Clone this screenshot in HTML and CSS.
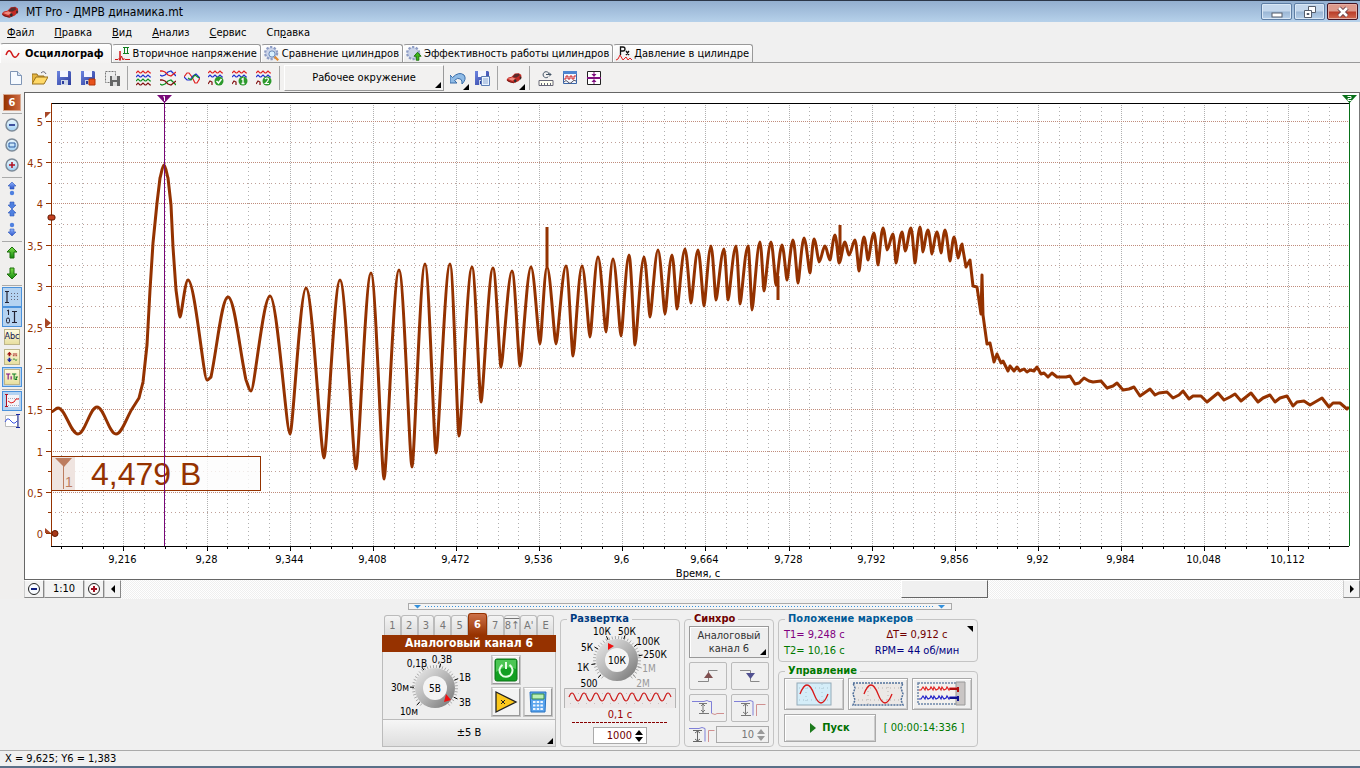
FILE: index.html
```html
<!DOCTYPE html>
<html lang="ru">
<head>
<meta charset="utf-8">
<title>MT Pro - ДМРВ динамика.mt</title>
<link rel="stylesheet" href="styles.css">
</head>
<body>
<svg class="defs" aria-hidden="true">
  <defs>
    <linearGradient id="g-blue" x1="0" y1="0" x2="0" y2="1"><stop offset="0" stop-color="#8fb4ff"/><stop offset="1" stop-color="#2a52c8"/></linearGradient>
    <linearGradient id="g-floppy" x1="0" y1="0" x2="1" y2="1"><stop offset="0" stop-color="#6d85e0"/><stop offset="1" stop-color="#2c3c9c"/></linearGradient>
    <linearGradient id="g-green" x1="0" y1="0" x2="0" y2="1"><stop offset="0" stop-color="#7ee04a"/><stop offset="1" stop-color="#148a10"/></linearGradient>
    <linearGradient id="g-knob" x1="0" y1="0" x2="1" y2="1"><stop offset="0" stop-color="#ececec"/><stop offset=".5" stop-color="#b4b4b4"/><stop offset="1" stop-color="#707070"/></linearGradient>
    <linearGradient id="g-lens" x1="0" y1="0" x2="0" y2="1"><stop offset="0" stop-color="#eefaff"/><stop offset="1" stop-color="#9fd0f4"/></linearGradient>
    <symbol id="car" viewBox="0 0 20 16"><path d="M1 9.500l2-2 4-1 4-4 5-.5 3 2 .5 4-4 4-6 2.500-6-1.500-2.500-2z" fill="#c22a24"/><path d="M8 7l3.500-4 4.500-.3 1 2.300-4 2.500z" fill="#5b2c2c"/><path d="M2 9l6-2 4 2-4 2.500z" fill="#f08a7e"/><path d="M1.500 11l4 2 4 .8" stroke="#5a1a18" fill="none"/><ellipse cx="11.500" cy="11.500" rx="1.600" ry="2" fill="#2e2e2e"/><ellipse cx="18" cy="8" rx="1" ry="1.800" fill="#2e2e2e"/></symbol>
    <symbol id="floppy" viewBox="0 0 16 16"><path d="M1 1h13l1 1v13H1z" fill="url(#g-floppy)"/><path d="M4 1h8v6H4z" fill="#f4f6ff"/><path d="M5 10h7v5H5z" fill="#cdd6e6"/><path d="M6 11h2v3H6z" fill="#2c3c9c"/></symbol>
    <symbol id="waves" viewBox="0 0 16 16"><g fill="none" stroke-width="1.200"><path d="M0 3l2-2 2 2h1l2-2 2 2h1l2-2 2 2h1" stroke="#e02020"/><path d="M0 7l2-2 2 2h1l2-2 2 2h1l2-2 2 2h1" stroke="#2030d0"/><path d="M0 11l2-2 2 2h1l2-2 2 2h1l2-2 2 2h1" stroke="#109020"/><path d="M0 15l2-2 2 2h1l2-2 2 2h1l2-2 2 2h1" stroke="#801010"/></g></symbol>
    <symbol id="waves3" viewBox="0 0 16 16"><g fill="none" stroke-width="1.200"><path d="M0 3l2-2 2 2h1l2-2 2 2h1l2-2 2 2h1" stroke="#e02020"/><path d="M0 7l2-2 2 2h1l2-2 2 2h1l2-2 2 2h1" stroke="#2030d0"/><path d="M0 14l2-3 2 1v3" stroke="#801010"/></g></symbol>
    <symbol id="gear" viewBox="0 0 18 18"><circle cx="8" cy="8" r="6.500" fill="#b9c4de" stroke="#8d9cc4" stroke-width="3" stroke-dasharray="2.400 1.700"/><circle cx="8" cy="8" r="5.500" fill="#ccd5ea"/></symbol>
  </defs>
</svg>

<header class="titlebar">
  <svg class="title-icon" viewBox="0 0 20 16"><use href="#car"/></svg>
  <h1>MT Pro - ДМРВ динамика.mt</h1>
  <div class="win-buttons">
    <button class="win" aria-label="Свернуть"><svg viewBox="0 0 28 16"><rect x="9" y="9" width="10" height="4" fill="#fff" stroke="#555d6b"/></svg></button>
    <button class="win" aria-label="Развернуть"><svg viewBox="0 0 28 16"><path d="M12.500 2.500h7v6h-7z" fill="#fff" stroke="#555d6b"/><path d="M8.500 6.500h7v7h-7z" fill="#fff" stroke="#555d6b"/><path d="M11 9.500h2v1h-2z" fill="#fff" stroke="#555d6b"/></svg></button>
    <button class="win close" aria-label="Закрыть"><svg viewBox="0 0 28 16"><path d="M10 4l8 8M18 4l-8 8" stroke="#65404a" stroke-width="4.500"/><path d="M10 4l8 8M18 4l-8 8" stroke="#fff" stroke-width="2.600"/></svg></button>
  </div>
</header>

<nav class="menu">
  <button><u>Ф</u>айл</button><button><u>П</u>равка</button><button><u>В</u>ид</button><button><u>А</u>нализ</button><button><u>С</u>ервис</button><button>Сп<u>р</u>авка</button>
</nav>

<nav class="tabs" role="tablist">
  <button class="tab active" role="tab" aria-selected="true"><svg class="ic" viewBox="0 0 16 16"><path d="M1 9q3-8 6-1t7-1" fill="none" stroke="#d01818" stroke-width="1.500"/></svg>Осциллограф</button>
  <button class="tab" role="tab"><svg class="ic" viewBox="0 0 16 16"><path d="M0 13.500h3l1-1 1 2V5v9l1.500-4 1.500 4 1-1.500 1 1h5" fill="none" stroke="#d01818"/><path d="M8 1.500h6M8 7.500h6M9.500 1v6M12.500 1v6" stroke="#108020" fill="none"/></svg>Вторичное напряжение</button>
  <button class="tab" role="tab"><svg class="ic" viewBox="0 0 18 18"><use href="#gear"/><circle cx="9" cy="9" r="3.500" fill="#d8f0ff" stroke="#5a7cb0"/><path d="M12 12l4 4" stroke="#e08a30" stroke-width="2.500"/></svg>Сравнение цилиндров</button>
  <button class="tab" role="tab"><svg class="ic" viewBox="0 0 18 18"><use href="#gear"/><path d="M13 7l4 4.500h-2.500V16h-3v-4.500H9z" fill="#3db61c" stroke="#176f0a"/></svg>Эффективность работы цилиндров</button>
  <button class="tab" role="tab"><svg class="ic" viewBox="0 0 16 16"><path d="M4.500 9V1H7q2 0 2 2T7 5H5M10 5l3 4M13 5l-3 4" fill="none" stroke="#111" stroke-width="1.300"/><path d="M0 14l2-1 2-4 3 5 3-3 2 3 2-2 2 2" fill="none" stroke="#e02020"/></svg>Давление в цилиндре</button>
</nav>

<div class="toolbar" role="toolbar">
  <button class="tool" aria-label="Новый"><svg viewBox="0 0 16 16"><path d="M2.500 1.500h7l4 4v9h-11z" fill="#f6faff" stroke="#7f95b5"/><path d="M9.500 1.500v4h4" fill="#d5e2f2" stroke="#7f95b5"/></svg></button>
  <button class="tool" aria-label="Открыть"><svg viewBox="0 0 16 16"><path d="M0 14V4h5l1 2h6v3" fill="#e5b540" stroke="#98701c"/><path d="M0 14l4-7h12l-4 7z" fill="#ffd968" stroke="#98701c"/><path d="M9 3q3-3 5 1" stroke="#667" fill="none"/></svg></button>
  <button class="tool" aria-label="Сохранить"><svg viewBox="0 0 16 16"><use href="#floppy"/></svg></button>
  <button class="tool" aria-label="Сохранить как"><svg viewBox="0 0 16 16"><use href="#floppy"/><path d="M9 9h6v6H9z" fill="#e8521c" stroke="#b03408"/></svg></button>
  <button class="tool" aria-label="Сохранить фрагмент"><svg viewBox="0 0 16 16"><path d="M1.500 1.500h10v11h-10z" fill="#eee" stroke="#777" stroke-dasharray="2 1"/><path d="M6 6h10v10H6z" fill="#666"/><path d="M8 6h5v4H8zM9 12h4v4H9z" fill="#ddd"/></svg></button>
  <i class="vsep"></i>
  <button class="tool" aria-label="Раздельно"><svg viewBox="0 0 16 16"><use href="#waves"/></svg></button>
  <button class="tool" aria-label="Попарно"><svg viewBox="0 0 16 16"><g fill="none" stroke-width="1.300"><path d="M0 5l2 1 3-1 3-3 3-1 5 5" stroke="#2030d0"/><path d="M0 1h2l3 1 3 3 3 1 5-4" stroke="#e02020"/><path d="M0 14l2 1 3-1 3-3 3-1 5 5" stroke="#109020"/><path d="M0 10h2l3 1 3 3 3 1 5-4" stroke="#801010"/></g></svg></button>
  <button class="tool" aria-label="Совместно"><svg viewBox="0 0 16 16"><g fill="none" stroke-width="1.200"><path d="M0 7l3-4 2 0 3 4 3 6h2l3-5" stroke="#e02020"/><path d="M0 7l3 3 3 0 3-4 3-2 4 4" stroke="#2030d0"/><path d="M4 8l3 2 4-5 4 3" stroke="#109020"/></g></svg></button>
  <button class="tool" aria-label="Готово"><svg viewBox="0 0 16 16"><use href="#waves3"/><circle cx="11" cy="11" r="4.500" fill="#2c9a2c"/><path d="M8.500 11l2 2 3-4" fill="none" stroke="#fff" stroke-width="1.500"/></svg></button>
  <button class="tool" aria-label="Вид 1"><svg viewBox="0 0 16 16"><use href="#waves3"/><circle cx="11" cy="11" r="4.500" fill="#2c9a2c"/><path d="M9.500 9.500l1.500-1v5M9.500 13.500h3" fill="none" stroke="#fff" stroke-width="1.300"/></svg></button>
  <button class="tool" aria-label="Вид 2"><svg viewBox="0 0 16 16"><use href="#waves3"/><circle cx="11" cy="11" r="4.500" fill="#2c9a2c"/><path d="M9 9q2-2 3.500 0 0 2-3 4.500h3.500" fill="none" stroke="#fff" stroke-width="1.200"/></svg></button>
  <i class="vsep"></i>
  <button class="workspace corner">Рабочее окружение</button>
  <button class="tool corner" aria-label="Отменить"><svg viewBox="0 0 16 16"><path d="M0 5v8h7L4.500 10.500q3-3.500 6-1.500 2 1.500 1.500 5 5-5 2-9Q9 1 2.500 7.500z" fill="#8fbbe6" stroke="#3a6da8"/></svg></button>
  <button class="tool" aria-label="Сохранить копию"><svg viewBox="0 0 16 16"><use href="#floppy"/><path d="M7.500 6.500h8v9h-8z" fill="#eaf3ff" stroke="#5c7db4"/><path d="M9 9h5M9 11h5M9 13h5" stroke="#8ba6d0"/></svg></button>
  <i class="vsep"></i>
  <button class="tool corner" aria-label="Автомобиль"><svg viewBox="0 0 20 16"><use href="#car"/></svg></button>
  <i class="vsep"></i>
  <button class="tool" aria-label="Линейка"><svg viewBox="0 0 16 16"><path d="M1 10.500h14v5H1z" fill="#fffff0" stroke="#667"/><path d="M3.500 15v-2M6.500 15v-2M9.500 15v-2M12.500 15v-2" stroke="#667"/><path d="M11 4a3 3 0 1 0-1 3M8 4.500h5l-2-2M13 4.500l-2 2" fill="none" stroke="#456"/></svg></button>
  <button class="tool" aria-label="Осциллограммы"><svg viewBox="0 0 16 16"><path d="M1.500 1.500h13v12h-13z" fill="#f4f8ff" stroke="#3b66a8"/><path d="M1 1h14v3H1z" fill="#4f86d0"/><path d="M2 9h2V6h2v3h2V6h2v3h2V6h2" fill="none" stroke="#d02020"/><path d="M2 12q2-3 4 0t4 0 4-1" fill="none" stroke="#556"/></svg></button>
  <button class="tool" aria-label="Выравнивание"><svg viewBox="0 0 16 16"><path d="M1.500 1.500h13v13h-13z" fill="#fff" stroke="#222"/><path d="M1 8h14" stroke="#801080" stroke-width="2"/><path d="M7.500 2h1v2h2L8 7 5.500 4h2zM7.500 14h1v-2h2L8 9l-2.500 3h2z" fill="#801080"/></svg></button>
</div>

<main class="work">
  <aside class="side">
    <button class="badge">6</button>
    <i class="hsep"></i>
    <button class="sb" aria-label="Уменьшить"><svg viewBox="0 0 16 16"><circle cx="8" cy="8" r="6" fill="url(#g-lens)" stroke="#7c8a98" stroke-width="1.500"/><path d="M5 8h6" stroke="#102080" stroke-width="1.500"/></svg></button>
    <button class="sb" aria-label="По размеру"><svg viewBox="0 0 16 16"><circle cx="8" cy="8" r="6" fill="url(#g-lens)" stroke="#7c8a98" stroke-width="1.500"/><path d="M5 6h6v4H5z" fill="none" stroke="#2858a0"/></svg></button>
    <button class="sb" aria-label="Увеличить"><svg viewBox="0 0 16 16"><circle cx="8" cy="8" r="6" fill="url(#g-lens)" stroke="#7c8a98" stroke-width="1.500"/><path d="M5 8h6M8 5v6" stroke="#b01020" stroke-width="1.500"/></svg></button>
    <i class="hsep"></i>
    <button class="sb" aria-label="Сдвинуть вверх"><svg viewBox="0 0 16 16"><path d="M8 1l4 4h-2v3H6V5H4z" fill="url(#g-blue)" stroke="#3058b8" stroke-width=".6"/><circle cx="8" cy="12" r="2.200" fill="#4f80e0"/></svg></button>
    <button class="sb" aria-label="Сжать"><svg viewBox="0 0 16 16"><path d="M6 1h4v3h2L8 8 4 4h2zM6 15h4v-3h2L8 8l-4 4h2z" fill="#4f80e0" stroke="#3058b8" stroke-width=".6"/></svg></button>
    <button class="sb" aria-label="Сдвинуть вниз"><svg viewBox="0 0 16 16"><path d="M8 15l4-4h-2V8H6v3H4z" fill="url(#g-blue)" stroke="#3058b8" stroke-width=".6"/><circle cx="8" cy="4" r="2.200" fill="#4f80e0"/></svg></button>
    <i class="hsep"></i>
    <button class="sb" aria-label="Выше"><svg viewBox="0 0 16 16"><path d="M8 2l5 5h-3v6H6V7H3z" fill="url(#g-green)" stroke="#1c6e0c"/></svg></button>
    <button class="sb" aria-label="Ниже"><svg viewBox="0 0 16 16"><path d="M8 14l5-5h-3V3H6v6H3z" fill="url(#g-green)" stroke="#1c6e0c"/></svg></button>
    <i class="hsep"></i>
    <button class="sb on" aria-pressed="true" aria-label="Сетка"><svg viewBox="0 0 16 16"><path d="M1 2.500h4M3 2v12M1 13.500h4" stroke="#223" fill="none" stroke-width="1.200"/><path d="M7 4.500h8M7 7.500h8M7 10.500h8" stroke="#667" stroke-dasharray="1 2"/></svg></button>
    <button class="sb on" aria-pressed="true" aria-label="Шкала"><svg viewBox="0 0 16 16"><path d="M8 2.500h5M10.500 2v12M8 13.500h5" stroke="#223" fill="none" stroke-width="1.200"/><path d="M3 2l1.500-1v5M2.500 10.500q0-1.500 1.500-1.500t1.500 1.500v2q0 1.500-1.500 1.500t-1.500-1.500z" fill="none" stroke="#223"/></svg></button>
    <button class="sb label" aria-label="Подписи"><span>Abc</span></button>
    <button class="sb label" aria-label="Полярность"><svg viewBox="0 0 14 14"><path d="M4 1L1 4h2v2h2V4h2z" fill="#a01010"/><path d="M4 13l3-3H5V8H3v2H1z" fill="#1020a0"/><path d="M8 3.500h5M8 5.500h2M11 5.500h2" stroke="#a01010"/><path d="M8 10q1.500-2 2.500 0t2.500 0" stroke="#108020" fill="none"/></svg></button>
    <button class="sb label on" aria-pressed="true" aria-label="Маркеры"><svg viewBox="0 0 14 14"><path d="M0 3.500h5M2.500 3v7M6 6v4" stroke="#801080" stroke-width="1.300"/><path d="M7 3.500h5M9.500 3v7M11 7h2l-2 3h2" fill="none" stroke="#108020" stroke-width="1.200"/></svg></button>
    <i class="hsep"></i>
    <button class="sb on" aria-pressed="true" aria-label="Левая шкала"><svg viewBox="0 0 16 16"><path d="M3 2h12v12H3z" fill="#f4f4f8"/><path d="M2.500 1v13M1 1.500h3M1 13.500h3" stroke="#b01020"/><path d="M4 5.500h11M4 12.500h11" stroke="#aab" stroke-dasharray="1 1"/><path d="M4 8l3 2 3-1 2-3 3 0" fill="none" stroke="#e02020"/></svg></button>
    <button class="sb" aria-label="Правая шкала"><svg viewBox="0 0 16 16"><path d="M1.500 2.500h12v11h-12z" fill="#fff" stroke="#bbb"/><path d="M14 1v14M12 1.500h4M12 14.500h4" stroke="#1828a0"/><path d="M1 9l2-3h2l4 4h2l2-2" fill="none" stroke="#4058e0"/></svg></button>
  </aside>
  <section class="view">
    <svg id="chart" class="chart" role="img" aria-label="Осциллограмма, канал 6"></svg>
    <div class="scroll">
      <button class="sbtn" aria-label="Мельче"><svg viewBox="0 0 14 14"><circle cx="7" cy="7" r="5.500" fill="#f8fbff" stroke="#222"/><path d="M4 7h6" stroke="#102080" stroke-width="2"/></svg></button>
      <button class="sbtn scale">1:10</button>
      <button class="sbtn" aria-label="Крупнее"><svg viewBox="0 0 14 14"><circle cx="7" cy="7" r="5.500" fill="#fff8f8" stroke="#222"/><path d="M4 7h6M7 4v6" stroke="#a01020" stroke-width="2"/></svg></button>
      <button class="sbtn arrow" aria-label="Назад"><svg viewBox="0 0 8 8"><path d="M6 0v8L2 4z" fill="#000"/></svg></button>
      <div class="track"><i class="before"></i><button class="thumb" aria-label="Прокрутка"></button><i class="after"></i></div>
      <button class="sbtn arrow" aria-label="Вперёд"><svg viewBox="0 0 8 8"><path d="M2 0v8l4-4z" fill="#000"/></svg></button>
    </div>
  </section>
</main>

<section class="deck">
  <button class="splitter" aria-label="Скрыть панель"><svg viewBox="0 0 8 5"><path d="M0 1h7L3.500 4.500z" fill="#3390dc"/></svg><i></i><svg viewBox="0 0 8 5"><path d="M0 1h7L3.500 4.500z" fill="#3390dc"/></svg></button>
  <div class="groups">
    <section class="channel">
      <div class="chtabs"><button>1</button><button>2</button><button>3</button><button>4</button><button>5</button><button class="cur">6</button><button>7</button><button><span class="over">8↑</span></button><button>A'</button><button>E</button></div>
      <h2>Аналоговый канал 6</h2>
      <div class="chbody">
        <svg id="knob-v" class="knob-v" viewBox="383 651 104 68"></svg>
        <div class="chbuttons">
          <button class="sq power" aria-label="Включить"><svg viewBox="0 0 24 24"><rect x="1" y="1" width="22" height="22" rx="2" fill="#12a022" stroke="#0b7416"/><path d="M2 2h20v9q-10-4-20 3z" fill="#4cc654"/><path d="M8.500 6.800a6.500 6.500 0 1 0 7 0M12 4v7" fill="none" stroke="#e6ffe6" stroke-width="2"/></svg></button>
          <button class="sq" aria-label="Усилитель"><svg viewBox="0 0 24 24"><path d="M2 2l20 10L2 22z" fill="#fbc81c" stroke="#222" stroke-width="1.300"/><path d="M7 10l4 4M11 10l-4 4" stroke="#222"/></svg></button>
          <button class="sq" aria-label="Калькулятор"><svg viewBox="0 0 24 24"><path d="M4 2h16l-1 20H5z" fill="#5aa4ee" stroke="#2872c0"/><path d="M6 4h12v5H6z" fill="#b9f0b4" stroke="#358848"/><path d="M7 12h10M7 15.500h10M7 19h10" stroke="#eef6ff" stroke-width="2" stroke-dasharray="2.500 1.200"/></svg></button>
        </div>
      </div>
      <button class="range corner">±5 В</button>
    </section>

    <fieldset class="sweep">
      <legend class="navy">Развертка</legend>
      <svg id="knob-t" class="knob-t" viewBox="564 626 112 62"></svg>
      <svg class="wave" viewBox="0 0 112 20"><rect width="112" height="20" fill="#ece9e9"/><path d="M.5 20V.5h111V20" fill="none" stroke="#b4b4b4"/><path d="M6 5.500h104M6 15.500h104" stroke="#c8c0c0" stroke-dasharray="1 7"/><path d="M5 9q3-8 6 0t6 0 6 0 6 0 6 0 6 0 6 0 6 0 6 0 6 0 6 0 6 0 6 0 6 0 6 0 6 0 6 0" fill="none" stroke="#cc1c1c" stroke-width="1.200"/></svg>
      <output class="span">0,1 с</output>
      <div class="dash"></div>
      <div class="spin"><input aria-label="Развертка" value="1000"><button aria-label="Изменить"><svg viewBox="0 0 8 12"><path d="M0 5h8L4 0zM0 7h8l-4 5z" fill="#000"/></svg></button></div>
    </fieldset>

    <fieldset class="sync">
      <legend class="maroon">Синхро</legend>
      <button class="source corner">Аналоговый<br>канал 6</button>
      <div class="syncgrid">
        <button class="flat" aria-label="Фронт"><svg viewBox="0 0 36 26"><path d="M8 18.500h10.500v-11h9" fill="none" stroke="#888"/><path d="M14 15h9l-4.500-6z" fill="#805050"/></svg></button>
        <button class="flat" aria-label="Спад"><svg viewBox="0 0 36 26"><path d="M8 7.500h10.500v11h9" fill="none" stroke="#888"/><path d="M14 10h9l-4.500 6z" fill="#505090"/></svg></button>
        <button class="flat" aria-label="Уровень"><svg viewBox="0 0 36 26"><path d="M2 6.500h12l3-1 2 1h2.500v12" fill="none" stroke="#8080d8"/><path d="M22 18.500l3 1 2-1h7" fill="none" stroke="#d09090"/><path d="M9 8.500h8M13 9v9M9 18.500h10M11 11l2-2 2 2M11 15l2 2 2-2" fill="none" stroke="#777"/></svg></button>
        <button class="flat" aria-label="Разность"><svg viewBox="0 0 36 26"><path d="M2 6.500h12l4-1 3 1v14" fill="none" stroke="#8080d8"/><path d="M24.500 21V9.500h9" fill="none" stroke="#d09090"/><path d="M9 8.500h9M13.500 8v12M9 20.500h10M11 11l2.500-2 2.500 2M11 17l2.500 2 2.500-2" fill="none" stroke="#777"/></svg></button>
      </div>
      <div class="hyst"><svg viewBox="0 0 26 18"><path d="M0 2.500h10l3-1 3 1v13" fill="none" stroke="#8080d8"/><path d="M19.500 16V4.500h6" fill="none" stroke="#d09090"/><path d="M4 4.500h9M8.500 4v12M4 15.500h9M6 7l2.500-2L11 7M6 13l2.500 2 2.500-2" fill="none" stroke="#666"/></svg>
        <div class="spin off"><input aria-label="Гистерезис" value="10" disabled><button aria-label="Изменить гистерезис" disabled><svg viewBox="0 0 8 12"><path d="M0 5h8L4 0zM0 7h8l-4 5z" fill="#999"/></svg></button></div></div>
    </fieldset>

    <div class="right">
      <fieldset class="markers">
        <legend class="blue">Положение маркеров</legend>
        <button class="fold" aria-label="Свернуть маркеры"></button>
        <output class="purple">T1= 9,248 с</output><output class="maroon mid">∆T= 0,912 с</output>
        <output class="green">T2= 10,16 с</output><output class="darkblue mid">RPM= 44 об/мин</output>
      </fieldset>
      <fieldset class="control">
        <legend class="green">Управление</legend>
        <div class="modes">
          <button class="mode" aria-label="Осциллограф"><svg viewBox="0 0 56 28"><rect x="11" y="3" width="34" height="22" fill="#d4edf8" stroke="#93aab8"/><path d="M13 8h30M13 20h30M20 4v20M36 4v20" stroke="#a9c4d0" stroke-dasharray="1 3"/><path d="M14 14q7-18 14 0t14 0" fill="none" stroke="#d81818" stroke-width="1.300"/></svg></button>
          <button class="mode" aria-label="Рулон"><svg viewBox="0 0 56 28"><path d="M3 3h50l-2 5 2 6-2 6 2 5H3l2-5-2-6 2-6z" fill="#ebe8e6" stroke="#50709a" stroke-width="1.500" stroke-dasharray="2 1"/><path d="M18 3v22M38 3v22M8 8h42M8 20h42" stroke="#b8b4b0" stroke-dasharray="1 3"/><path d="M14 14q7-18 14 0t14 0" fill="none" stroke="#d81818" stroke-width="1.300"/></svg></button>
          <button class="mode" aria-label="Запись"><svg viewBox="0 0 56 28"><path d="M4 3h46v21H4z" fill="#f3f1ee" stroke="#6d86a8" stroke-width="1.500" stroke-dasharray="2 1"/><path d="M42 2h9v23h-9z" fill="#c9c5c4" stroke="#999"/><path d="M5 10h2l2-3 2 3 1-3 2 3 2-1 1-2 2 3 1-3 2 3 2-1 1-2 2 3 1-3 2 3 2-1 1-2 2 3 1-2h8" fill="none" stroke="#e02020" stroke-width="1.200"/><path d="M36 9h8M44 7v5" stroke="#b01010" stroke-width="2"/><path d="M5 19h2l2-3 2 3 1-3 2 3 2-1 1-2 2 3 1-3 2 3 2-1 1-2 2 3 1-3 2 3 2-1 1-2 2 3 1-2h8" fill="none" stroke="#2020c8" stroke-width="1.200"/><path d="M36 18h8M44 16v5" stroke="#101090" stroke-width="2"/></svg></button>
        </div>
        <div class="run"><button class="start"><svg viewBox="0 0 6 10"><path d="M0 0v10l6-5z" fill="#1c7a1c"/></svg>Пуск</button><output class="green">[ 00:00:14:336 ]</output></div>
      </fieldset>
    </div>
  </div>
</section>

<footer class="status">X = 9,625; Y6 = 1,383</footer>
<script src="chart.js"></script>
</body>
</html>
```
FILE: styles.css
```css
* { box-sizing: border-box; }
html, body { height: 100%; }
body {
  margin: 0; display: flex; flex-direction: column; min-height: 760px;
  background: #f0f0f0; color: #000;
  font: 11px/14px "DejaVu Sans Condensed", "DejaVu Sans", sans-serif;
  border-bottom: 2px solid #5a7088;
}
button, input { font: inherit; color: inherit; margin: 0; padding: 0; border: 0; background: none; }
button { display: flex; align-items: center; justify-content: center; }
svg { display: block; flex: none; }
fieldset { margin: 0; min-width: 0; }
.defs { position: absolute; width: 0; height: 0; }

.titlebar { display: flex; align-items: center; height: 22px; flex: none; padding: 0 2px 0 1px; border-top: 1px solid #2b3648; background: linear-gradient(#93afd0, #b6d1ea); }
.titlebar h1 { margin: 0; font-size: 12px; font-weight: normal; flex: 1; }
.title-icon { width: 18px; height: 14px; margin-right: 7px; }
.win-buttons { display: flex; gap: 2px; }
.win { width: 31px; height: 17px; border: 1px solid #5e7ea4; border-radius: 2px; background: linear-gradient(#c4d7ec 48%, #9ab6d4 52%, #b7d0ea); box-shadow: inset 0 0 0 1px #d9e7f5; }
.win svg { width: 28px; height: 16px; }
.win.close { border-color: #431422; background: linear-gradient(#dd9a8c 48%, #b93b28 52%, #d06a50); box-shadow: inset 0 0 0 1px #e5aea4; }

.menu { display: flex; gap: 20px; padding: 0 7px; height: 21px; flex: none; }
.tabs { display: flex; align-items: flex-end; height: 20px; flex: none; border-bottom: 1px solid #999; }
.tab { height: 18px; padding: 0 3px 0 2px; gap: 2px; border: 1px solid #999; border-left-color: #fff; border-bottom: 0; border-radius: 3px 3px 0 0; background: linear-gradient(#fff, #ececec); white-space: nowrap; }
.tab.active { height: 20px; margin-bottom: -1px; padding: 0 7px 0 4px; gap: 4px; font-weight: bold; background: linear-gradient(#fff, #f3f2f1); }
.ic { width: 16px; height: 16px; }

.toolbar { display: flex; align-items: center; height: 29px; flex: none; padding-left: 4px; background: #f2f1f0; }
.tool { width: 24px; height: 24px; position: relative; }
.tool svg { width: 16px; height: 16px; }
.vsep { width: 1px; height: 24px; margin: 0 4px 0 3px; background: #a5a5a5; }
.corner { position: relative; }
.corner::after { content: ""; position: absolute; right: 2px; bottom: 2px; border: 3px solid; border-color: transparent #000 #000 transparent; }
.tool.corner::after { bottom: 0; right: 1px; }
.workspace { width: 160px; height: 26px; margin-right: 2px; border: 1px solid; border-color: #fff #999 #999 #fff; background: #f2f1f0; }

.work { display: flex; flex: 1; min-height: 0; }
.side { width: 24px; flex: none; padding: 2px 2px 0; background: #f0efee; }
.badge { width: 18px; height: 17px; margin: 0 1px; border: 1px solid #d8a890; background: linear-gradient(90deg, #963200, #cc6840); color: #fff; font-weight: bold; }
.hsep { display: block; height: 1px; margin: 2px 0 1px; background: #aaa; }
.sb { width: 20px; height: 20px; position: relative; }
.sb svg { width: 16px; height: 16px; }
.sb.on { background: #b5d3f1; border: 1px solid #4a92dc; }
.sb.label span, .sb.label svg { width: 16px; height: 16px; padding: 1px; background: linear-gradient(#fffbe0, #e8dfa0); border: 1px solid #bdb58a; font-size: 9px; line-height: 12px; }
.sb.label span { color: #101050; padding: 0; display: flex; justify-content: center; }

.view { flex: 1; min-width: 0; display: flex; flex-direction: column; }
.chart { flex: 1; min-height: 0; width: 100%; background: #fff; border: 1px solid #666; border-right-color: #777; }
.chart text { font-family: "DejaVu Sans Condensed", "DejaVu Sans", sans-serif; font-size: 11px; }
.chart .reading { font-family: "Liberation Sans", sans-serif; font-size: 32px; }
.chart .mark { font-family: "Liberation Sans", sans-serif; font-size: 14px; }
.scroll { display: flex; height: 19px; flex: none; }
.sbtn { width: 20px; height: 18px; background: #f3f3f3; border: 1px solid; border-color: #fff #888 #888 #ccc; }
.sbtn svg { width: 14px; height: 14px; }
.sbtn.scale { width: 40px; }
.sbtn.arrow { width: 17px; }
.sbtn.arrow svg { width: 8px; height: 8px; }
.track { display: flex; flex: 1; background: repeating-conic-gradient(#efefef 0 25%, #fff 0 50%) 0 0 / 2px 2px; }
.before { flex: 781; }
.thumb { flex: 85; height: 18px; background: #f0f0f0; border: 1px solid; border-color: #fff #666 #666 #fff; }
.after { flex: 356; }

.deck { flex: none; display: flex; flex-direction: column; align-items: center; gap: 2px; padding: 4px 0; height: 152px; border-bottom: 1px solid #aaa; }
.splitter { width: 544px; height: 7px; gap: 3px; padding: 0 5px; border: 1px solid #aaa; background: #f4f4f4; }
.splitter svg { width: 8px; height: 5px; }
.splitter i { flex: 1; height: 1px; background: repeating-linear-gradient(90deg, #3390dc 0 1px, transparent 1px 3px); }
.groups { display: flex; align-items: flex-end; gap: 4px; height: 135px; }

.channel { width: 174px; display: flex; flex-direction: column; }
.chtabs { display: flex; align-items: flex-end; padding: 0 2px; height: 22px; }
.chtabs button { width: 17px; height: 20px; color: #777; border: 1px solid #bbb; border-bottom: 0; border-radius: 3px 3px 0 0; background: linear-gradient(#f4f4f4, #dcdcdc); }
.chtabs .cur { width: 19px; height: 22px; color: #fff; font-weight: bold; border-color: #963200; background: linear-gradient(#cc7048, #963200); }
.over { text-decoration: overline; }
.channel h2 { margin: 0; height: 17px; font-size: 12px; line-height: 17px; text-align: center; color: #fff; background: #963200; }
.chbody { display: flex; justify-content: space-between; height: 68px; padding-right: 3px; border: 1px solid #bbb; border-top: 0; background: #eee; }
.knob-v { width: 104px; height: 68px; }
.knob-v text, .knob-t text { font-size: 10px; text-anchor: middle; }
.chbuttons { display: grid; grid-template-columns: 28px 28px; grid-auto-rows: 28px; gap: 4px; padding-top: 4px; }
.sq { border: 1px solid; border-color: #fff #999 #999 #ccc; background: #f3f3f3; box-shadow: 0 0 0 1px #c4c4c4; }
.sq svg { width: 24px; height: 24px; }
.power { grid-column: 1 / 3; width: 28px; }
.range { height: 27px; border: 1px solid #bbb; border-top: 0; background: linear-gradient(#f6f6f6, #dedede); }

fieldset { border: 1px solid #c4c4c4; border-radius: 4px; padding: 0 5px; }
legend { padding: 0 3px; height: 14px; font-weight: bold; }
.navy { color: #003a80; } .maroon { color: #700000; } .blue { color: #005a98; }
.green { color: #007800; } .purple { color: #800080; } .darkblue { color: #000080; }
.sweep { width: 120px; height: 135px; padding: 0 3px; }
.sweep legend { margin-left: 3px; }
.knob-t { width: 112px; height: 62px; }
.wave { width: 112px; height: 20px; }
.span { display: block; text-align: center; color: #900; line-height: 14px; }
.dash { margin: 0 8px; height: 1px; background: repeating-linear-gradient(90deg, #800 0 3px, transparent 3px 4px); }
.spin { display: flex; align-items: center; width: 54px; height: 17px; margin: 4px auto 0; padding-right: 3px; border: 1px solid #aaa; background: #fff; }
.spin input { flex: 1; min-width: 0; width: 100%; padding-right: 3px; text-align: right; color: #700000; }
.spin svg { width: 8px; height: 12px; }
.spin.off { background: #f0f0f0; margin: 0; }
.spin.off input { color: #777; }

.sync { width: 90px; height: 135px; padding: 0 4px; display: flow-root; }
.sync legend { margin-left: 2px; }
.source { width: 80px; height: 32px; margin-bottom: 4px; line-height: 13px; color: #333; border: 1px solid #999; background: #eee; box-shadow: inset 1px 1px #fff; }
.syncgrid { display: grid; grid-template-columns: 38px 38px; grid-auto-rows: 28px; gap: 4px; margin-bottom: 4px; }
.flat { border: 1px solid #bbb; border-radius: 2px; }
.flat svg { width: 36px; height: 26px; }
.hyst { display: flex; gap: 1px; }
.hyst > svg { width: 26px; height: 18px; }

.right { display: flex; flex-direction: column; gap: 2px; width: 200px; }
.markers { height: 50px; display: grid; grid-template-columns: 1fr 1fr; align-content: start; row-gap: 2px; padding-top: 2px; position: relative; }
.markers legend, .control legend { margin-left: 1px; }
.mid { text-align: center; margin: 0 4px 0 -12px; white-space: nowrap; }
.fold { position: absolute; right: 4px; top: 0; border: 3px solid; border-color: #000 #000 transparent transparent; }
.control { height: 83px; }
.modes { display: flex; gap: 4px; margin-bottom: 4px; }
.mode, .start { flex: 1; height: 32px; border: 1px solid #aaa; background: #f0f0f0; box-shadow: inset 1px 1px #fff, inset -1px -1px #ccc; }
.mode svg { width: 56px; height: 28px; }
.run { display: flex; align-items: center; }
.start { flex: none; width: 92px; height: 28px; gap: 6px; color: #007000; font-weight: bold; }
.start svg { width: 6px; height: 10px; }
.run output { flex: 1; text-align: center; white-space: nowrap; }

.status { flex: none; height: 15px; padding: 1px 5px; }
```
FILE: chart.js
```js
const INK = '#943200';

// Trace samples on the recorder grid: x 51..1349 covers the visible span,
// y 121 is 5 V and y 533 is 0 V. Smooth part first, then the fine-grained tail.
const smooth = '51,412 58,408 78,434 97,407 116,434 132,409 139,398 143,382 147,345 150,290 153,243 157,203 160,178 164,165 168,178 171,205 173,247 176,290 180,317 188,280 207,380 211,377 228,297 246,380 251,391 270,296 290,434 306,288 324,458 340,280 356,469 371,273 384,479 399,270 412,467 425,264 436,453 450,264 459,436 472,267 481,402 493,268 501,367 512,271 520,366 531,267 540,344 547,267 556,344 566,266 573,356 582,266 590,337 598,257 606,332 613,259 621,336 629,255 635,345 644,257 650,317 658,250 665,314 672,255 677,309 685,249 691,303 698,250 704,306 711,246 716,300 724,249 728,300 736,246 740,304 748,246 752,310 760,242 764,291 771,242 776,285 782,245 787,280 793,240 798,283 804,238 810,273 814,239 819,262 825,246 830,260 835,235 839,263 845,242 849,255 855,240 859,271 864,237 868,260 874,233 878,265 883,228 887,250 893,234 896,263 902,232 905,251 911,228 915,263 920,227 923,252 928,230 932,254 937,232 941,253 945,230 950,261 954,237 958,258 962,244';
const tail = '966,267 970,260 973,286 977,287 981,314 982,275 983,315 987,344 990,343 994,362 997,354 1001,363 1003,361 1008,371 1010,366 1014,371 1017,367 1020,371 1024,369 1027,372 1030,370 1034,371 1037,367 1041,374 1044,373 1048,377 1052,373 1057,377 1066,377 1070,376 1075,384 1079,383 1084,378 1089,381 1093,382 1101,381 1107,388 1113,386 1117,383 1123,390 1129,389 1134,387 1140,396 1150,389 1155,395 1159,393 1167,392 1173,398 1179,395 1183,391 1189,399 1193,396 1201,396 1207,402 1218,393 1224,400 1230,397 1235,394 1241,401 1251,393 1258,402 1263,398 1270,395 1275,402 1280,398 1287,396 1293,406 1297,402 1304,401 1310,405 1322,398 1329,407 1333,403 1340,403 1347,409 1349,407';
const spikes = [[547, 227, 267], [778, 276, 300], [840, 225, 255], [982, 275, 315]];

const parse = s => s.split(' ').map(p => p.split(',').map(Number));

function drawChart() {
  const el = document.getElementById('chart');
  const W = el.clientWidth, H = el.clientHeight;
  const left = 26, top = 10, right = W - 10, bottom = H - 33;
  const X = v => left + (v - 51) / 1298 * (right - left);
  const Y = v => top + (v - 103) / 443 * (bottom - top);
  const R = v => Math.round(v) + 0.5;
  const line = (x1, y1, x2, y2, color, extra = '') => `<line x1="${x1}" y1="${y1}" x2="${x2}" y2="${y2}" stroke="${color}" ${extra}/>`;
  const num = v => String(+v.toFixed(3)).replace('.', ',');
  let s = '';

  for (let i = 0; i < 63; i++) {
    const x = R(X(61 + i * 20.79));
    if (x >= right) break;
    const major = i % 4 === 3;
    s += line(x, top, x, bottom, '#b0b0b0', `stroke-dasharray="1 ${major ? 1 : 3}"`);
    s += line(x, bottom, x, bottom + (major ? 5 : 3), '#000');
    if (major) s += `<text x="${x - 1}" y="${bottom + 17}" text-anchor="middle">${num(9.216 + (i - 3) / 4 * 0.064)}</text>`;
  }
  for (let i = 0; i <= 20; i++) {
    const y = R(Y(533 - i * 20.6)), major = i % 2 === 0;
    if (i) s += line(left, y, right, y, major ? '#c08c7c' : '#c0a098', `stroke-dasharray="1 ${major ? 1 : 3}"`);
    s += line(left - (major ? 5 : 3), y, left, y, INK);
    if (major) s += `<text x="${left - 8}" y="${y + 4}" text-anchor="end" fill="${INK}">${num(i / 4)}</text>`;
  }
  s += `<text x="${(left + right) / 2 - 2}" y="${bottom + 31}" text-anchor="middle">Время, с</text>`;
  s += line(left, top + .5, right, top + .5, '#000') + line(left, bottom + .5, right, bottom + .5, '#000');
  s += line(left + .5, top, left + .5, bottom, INK);

  // Reading box under the trace
  const by = Math.round(Y(456));
  s += `<rect x="${left + .5}" y="${by + .5}" width="209" height="34" fill="#fdfcfc" fill-opacity=".8" stroke="${INK}"/>
    <rect x="${left + 1}" y="${by + 1}" width="23" height="33" fill="#efe4e0"/>
    <path d="M${left + 4} ${by + 2}h17l-8 9zM${left + 12} ${by + 9}h1v24h-1z" fill="#bd7d60"/>
    <text class="mark" x="${left + 14}" y="${by + 31}" fill="#bd7d60">1</text>
    <text class="reading" x="${left + 40}" y="${by + 29}" fill="${INK}">4,479 В</text>`;

  const pts = parse(smooth).map(([x, y]) => [X(x), Y(y)]);
  let d = `M${pts[0]}`;
  for (let i = 1; i < pts.length; i++) {
    const [x0, y0] = pts[i - 1], [x, y] = pts[i];
    const before = pts[i - 2], after = pts[i + 1];
    const flat0 = !before || (y0 - before[1]) * (y - y0) <= 0;
    const flat1 = !after || (after[1] - y) * (y - y0) <= 0;
    // Lower turning points of steep swings are narrower than the crests
    const steep = Math.abs(y - y0) > 4 * (x - x0);
    const bend = low => (x - x0) * (steep && low ? 0.18 : 0.36);
    const t = (y - y0) * 0.33, run = (x - x0) * 0.33;
    d += `C${x0 + (flat0 ? bend(y < y0) : run)},${flat0 ? y0 : y0 + t} ${x - (flat1 ? bend(y > y0) : run)},${flat1 ? y : y - t} ${x},${y}`;
  }
  d += parse(tail).map(([x, y]) => `L${X(x)},${Y(y)}`).join('');
  for (const [x, a, b] of spikes) d += `M${X(x)},${Y(a)}V${Y(b)}`;
  s += `<path d="${d}" fill="none" stroke="${INK}" stroke-width="3" stroke-linejoin="round"/>`;

  // Time markers
  const m1 = R(X(164)), m2 = R(right);
  s += line(m1, top - 2, m1, bottom, '#780878') + line(m2, top - 2, m2, bottom, '#087018');
  s += `<path d="M${m1 - 7.5} ${top - 8}h15l-7.500 8z" fill="#780878"/><path d="M${m1 - 1.5} ${top - 6}l1.500-.5v4.500" fill="none" stroke="#fff"/>`;
  s += `<path d="M${m2 - 7.5} ${top - 8}h15l-7.500 8z" fill="#087018"/><path d="M${m2 - 2} ${top - 6.5}h3.500v2h-3v2h3.500" fill="none" stroke="#fff"/>`;

  // Handles on the voltage axis
  s += `<path d="M${left - 6} ${Y(112)}h6l-6 6zM${left - 6} ${Y(318)}l6 5-6 5zM${left - 6} ${Y(528)}l6 5h-6z" fill="#a84828"/>`;
  s += `<rect x="${left - 3}" y="${Y(215)}" width="7" height="5" rx="2" fill="#c44020" stroke="#601800"/>`;
  s += `<circle cx="${left + 4}" cy="${Y(533.5)}" r="3" fill="#a83818" stroke="#601800"/>`;
  el.innerHTML = s;
}

function drawKnob(id, cx, cy, r, labels, value, pointer) {
  let s = '';
  for (let a = 130; a <= 410; a += 8) {
    const c = Math.cos(a * Math.PI / 180), n = Math.sin(a * Math.PI / 180);
    s += `<line x1="${cx + c * r}" y1="${cy + n * r}" x2="${cx + c * (r + 3)}" y2="${cy + n * (r + 3)}" stroke="#aaa"/>`;
  }
  for (const [text, x, y, a, color] of labels) {
    const c = Math.cos(a * Math.PI / 180), n = Math.sin(a * Math.PI / 180);
    s += `<line x1="${cx + c * (r + 1)}" y1="${cy + n * (r + 1)}" x2="${cx + c * (r + 5)}" y2="${cy + n * (r + 5)}" stroke="${color || '#000'}"/>`;
    s += `<text x="${x}" y="${y + 4}" fill="${color || '#000'}">${text}</text>`;
  }
  s += `<circle cx="${cx}" cy="${cy}" r="${r}" fill="url(#g-knob)"/><circle cx="${cx}" cy="${cy}" r="12" fill="#f4f4f4"/>`;
  s += `<path d="${pointer}" fill="#f01010"/><text x="${cx}" y="${cy + 4}">${value}</text>`;
  document.getElementById(id).innerHTML = s;
}

drawKnob('knob-v', 435, 687, 20, [
  ['10м', 409, 710, 137], ['30м', 400, 686, 182], ['0,1В', 417, 662, 238],
  ['0,3В', 442, 658, 283], ['1В', 465, 676, 338], ['3В', 465, 701, 26]
], '5В', 'M446 693l5 6-7 2z');
drawKnob('knob-t', 617, 660, 21, [
  ['500', 589, 683, 137], ['1К', 583, 667, 170], ['5К', 587, 647, 210], ['10К', 602, 631, 246],
  ['50К', 627, 631, 288], ['100К', 648, 641, 322], ['250К', 655, 654, 349],
  ['1М', 649, 668, 18, '#999'], ['2М', 643, 683, 43, '#999']
], '10К', 'M608 643l6 3-6 4z');

drawChart();
new ResizeObserver(drawChart).observe(document.getElementById('chart'));
```
